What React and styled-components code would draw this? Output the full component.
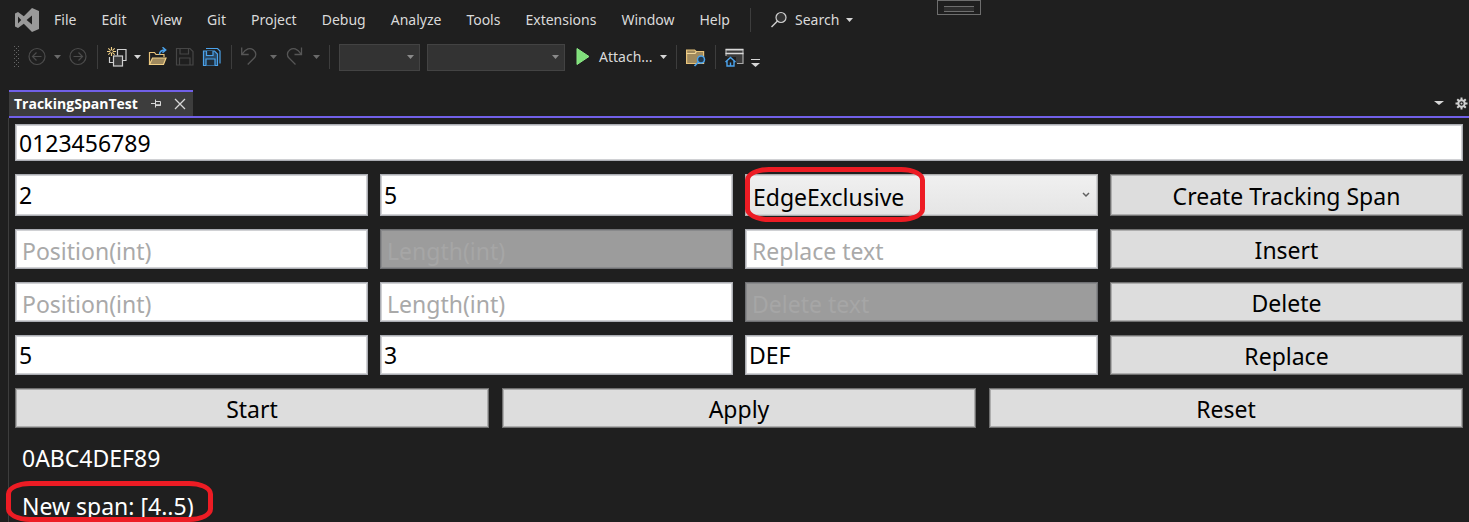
import React from "react";
import styled, { createGlobalStyle, css } from "styled-components";

const Global = createGlobalStyle`
  * { box-sizing: border-box; }
  body {
    margin: 0;
    background: #1f1f1f;
    font-family: "Noto Sans", "Open Sans", sans-serif;
  }
  button, input, select { font-family: inherit; margin: 0; }
`;

const Shell = styled.div`
  position: relative;
  min-height: 100vh;
  display: flex;
  flex-direction: column;
  background: #1f1f1f;
  color: #dadada;
  overflow: hidden;
`;

const MenuBar = styled.nav`
  display: flex;
  align-items: center;
  height: 40px;
  padding-left: 15px;
  gap: 25px;
  svg { flex: none; }
`;

const Logo = styled.svg`
  margin-right: -10px;
`;

const PlainButton = styled.button`
  display: flex;
  align-items: center;
  flex: none;
  padding: 0;
  border: 0;
  background: none;
  color: inherit;
  font-size: 14px;
  line-height: 20px;
  white-space: nowrap;
`;

const SearchButton = styled(PlainButton)`
  gap: 7px;
`;

const Separator = styled.span`
  flex: none;
  width: 1px;
  height: 24px;
  margin: 0 2px;
  background: #3d3d3d;
`;

const MenuSeparator = styled(Separator)`
  margin: 0 -6px 0 -5px;
`;

const DragHandle = styled.div`
  position: absolute;
  top: 0;
  left: 937px;
  width: 44px;
  height: 15px;
  padding: 5px 6px;
  border: 1px solid #6e6e6e;
  background: #1f1f1f;
  &::before {
    content: "";
    display: block;
    height: 4px;
    border: solid #6e6e6e;
    border-width: 1px 0;
    background: #2e2e2e;
  }
`;

const ToolBar = styled.div`
  display: flex;
  align-items: center;
  height: 34px;
  padding-left: 14px;
  gap: 7px;
  svg { flex: none; display: block; }
`;

const AttachButton = styled(PlainButton)`
  gap: 7px;
`;

const ToolSelect = styled.span`
  position: relative;
  display: flex;
  align-items: center;
  justify-content: flex-end;
  flex: none;
  width: ${(p) => p.$width}px;
  height: 27px;
  select {
    appearance: none;
    position: absolute;
    inset: 0;
    width: 100%;
    border: 1px solid #434343;
    background: #333333;
  }
  svg { position: relative; margin-right: 6px; pointer-events: none; }
`;

const TabStrip = styled.div`
  display: flex;
  align-items: center;
  justify-content: space-between;
  height: 28px;
  margin: 16px 0 0 9px;
  border-bottom: 2px solid #7160e8;
`;

const Tab = styled.div`
  display: flex;
  align-items: center;
  gap: 12px;
  height: 26px;
  padding: 0 7px 0 5px;
  border-top: 2px solid #7160e8;
  background: #3d3d3d;
  color: #fff;
  font-family: "Open Sans", "Noto Sans", sans-serif;
  font-size: 14px;
  font-weight: 700;
  line-height: 20px;
`;

const StripActions = styled.div`
  display: flex;
  align-items: center;
  gap: 11px;
  padding-right: 1px;
`;

const Panel = styled.main`
  flex: 1;
  display: flex;
  flex-direction: column;
  gap: 13px;
  margin-left: 8px;
  padding: 6px 6px 0;
  border-left: 1px solid #3d3d3d;
`;

const Row = styled.div`
  display: grid;
  grid-template-columns: repeat(${(p) => p.$columns}, minmax(0, 1fr));
  gap: ${(p) => (p.$columns === 3 ? 13 : 12)}px;
  height: ${(p) => p.$height || 40}px;
`;

const control = css`
  width: 100%;
  height: 100%;
  min-width: 0;
  border: 1px solid #abadb3;
  border-radius: 0;
  box-shadow: inset 0 0 0 1px #d0d1d4;
  color: #000;
  font-size: 23px;
  line-height: 32px;
`;

const TextBox = styled.input`
  ${control}
  padding: 0 3px;
  background: #fff;
  &::placeholder { color: #a9a9a9; opacity: 1; }
  &:placeholder-shown { padding: 4px 6px 0; }
  &:disabled {
    border-color: #6f7073;
    box-shadow: inset 0 0 0 1px #88898b;
    background: #9c9c9c;
  }
  &:disabled::placeholder { color: #a6a6a6; }
`;

const PushButton = styled.button`
  ${control}
  padding: 2px 0 0;
  border-color: #707070;
  box-shadow: inset 0 0 0 1px #adadad;
  background: #ddd;
`;

const ModeField = styled.div`
  position: relative;
  height: 100%;
  select {
    ${control}
    appearance: none;
    padding: 3px 8px 0 7px;
    border-color: #acacac;
    background: linear-gradient(#f0f0f0, #e5e5e5);
  }
  svg { position: absolute; right: 8px; top: 18px; pointer-events: none; }
`;

const Marker = styled.span`
  position: absolute;
  top: ${(p) => p.$top}px;
  left: ${(p) => p.$left}px;
  width: ${(p) => p.$width}px;
  height: ${(p) => p.$height}px;
  border: 5px solid #ed1c24;
  border-radius: 24px / 13px;
  pointer-events: none;
`;

const Results = styled.div`
  display: flex;
  flex-direction: column;
  align-items: flex-start;
  gap: 16px;
  padding: 1px 7px 0;
  color: #fff;
  font-size: 23px;
  line-height: 32px;
`;

const SpanResult = styled.output`
  position: relative;
`;

const Caret = ({ color = "#d6d6d6", width = 7 }) => (
  <svg width={width} height="4" viewBox="0 0 8 4" preserveAspectRatio="none" aria-hidden="true">
    <path d="M0 0h8L4 4z" fill={color} />
  </svg>
);

const LogoIcon = () => (
  <Logo width="24" height="24" viewBox="0 0 24 24" aria-label="Visual Studio">
    <path
      fillRule="evenodd"
      fill="#999"
      d="M17 0l7 3v18l-7 3-8.200-8.300L3 20l-3-1.500v-13L3 4l5.800 4.300zM17 7.500L11.600 12l5.400 4.500zM3 8.600v6.800L6.200 12z"
    />
  </Logo>
);

const SearchIcon = () => (
  <svg width="18" height="18" viewBox="0 0 18 18" fill="none" stroke="#d0d0d0" aria-hidden="true">
    <circle cx="11" cy="6.500" r="5" fill="#333" strokeWidth="1.200" />
    <path d="M7.500 10L1.500 16" strokeWidth="1.400" />
  </svg>
);

const GripIcon = () => (
  <svg width="6" height="22" viewBox="0 0 6 22" fill="#666" aria-hidden="true">
    {[0, 4, 8, 12, 16, 20].map((y) => (
      <path key={y} d={`M0 ${y}h1v1h-1zM4 ${y}h1v1h-1z`} />
    ))}
    {[2, 6, 10, 14, 18].map((y) => (
      <path key={y} d={`M2 ${y}h1v1h-1z`} />
    ))}
  </svg>
);

const ArrowCircle = ({ forward }) => (
  <svg width="20" height="20" viewBox="0 0 20 20" fill="none" stroke="#4c4c4c" strokeWidth="1.200" aria-hidden="true">
    <circle cx="10" cy="9.500" r="8" />
    {forward ? <path d="M5.500 9.500h9M10.500 5.500l4 4-4 4" /> : <path d="M14.500 9.500h-9M9.500 5.500l-4 4 4 4" />}
  </svg>
);

const NewItemIcon = () => (
  <svg width="20" height="20" viewBox="0 0 20 20" fill="none" aria-hidden="true">
    <g stroke="#d0d0d0" strokeWidth="1.200">
      <path d="M10 2.500h9v11h-3.500" />
      <path d="M2.500 10v5.500h4" />
      <rect x="6.500" y="9" width="9" height="10" fill="#3a3a3a" />
      <path d="M10.500 2.500v6" />
    </g>
    <path
      d="M4.500 0v9M0 4.500h9M1.300 1.300l6.400 6.400M7.700 1.300L1.300 7.700"
      stroke="#f0cf86"
      strokeWidth="1.100"
    />
    <circle cx="4.500" cy="4.500" r="1.300" fill="#1f1f1f" />
  </svg>
);

const OpenIcon = () => (
  <svg width="20" height="20" viewBox="0 0 20 20" fill="none" aria-hidden="true">
    <path d="M1.500 17V5.500h5l1.500 2h8V10" stroke="#e8c37a" strokeWidth="1.200" />
    <path d="M1.500 17.500l3-6.500h13.500l-2.500 6.500z" fill="#a08a5e" stroke="#f0cf86" strokeWidth="1.200" />
    <path d="M11.500 7.500c0-3 2-4.500 6-4.500M14.500 .300l3.200 2.700-3.200 2.800" stroke="#4ba3ec" strokeWidth="1.500" />
  </svg>
);

const SaveIcon = () => (
  <svg width="20" height="20" viewBox="0 0 20 20" fill="none" stroke="#464646" strokeWidth="1.200" aria-hidden="true">
    <path d="M1.500 1.500h13.500l3 3v13.500h-16.500z" />
    <path d="M5 1.500v5.500h8.500v-5.500M4.500 18v-7h10.500v7" />
  </svg>
);

const SaveAllIcon = () => (
  <svg width="20" height="20" viewBox="0 0 20 20" fill="none" stroke="#4ba3ec" strokeWidth="1.200" aria-hidden="true">
    <path d="M4 1.500h11.500l2.500 2.500v12.500" />
    <path d="M1.500 4h11l3 3v11.500h-14z" fill="#2a4a66" />
    <path d="M4.500 4v4.500h6.500v-4.500M4 18.500v-6.500h9v6.500" fill="#1f2b36" />
  </svg>
);

const UndoIcon = ({ flip }) => (
  <svg width="22" height="20" viewBox="0 0 22 20" fill="none" stroke="#565656" strokeWidth="1.300" aria-hidden="true">
    {flip ? (
      <path d="M17.500 .500v7h-7M17 7C13.500 1.500 9 .500 6 2.800C2.500 5.500 3 9 5 11L11.500 17.500" />
    ) : (
      <path d="M.700 .500v7h7M1.200 7C4.700 1.500 9.200 .500 12.200 2.800C15.700 5.500 15.200 9 13.200 11L6.700 17.500" />
    )}
  </svg>
);

const PlayIcon = () => (
  <svg width="20" height="18" viewBox="0 0 20 18" aria-hidden="true">
    <path d="M5 .500l12 8-12 8z" fill="#80df7b" stroke="#8ae885" />
  </svg>
);

const FolderSearchIcon = () => (
  <svg width="20" height="20" viewBox="0 0 20 20" fill="none" aria-hidden="true">
    <path d="M.600 16.500V3h8l1.500 1.500h7.500v12z" fill="#a08a5e" stroke="#e8c37a" strokeWidth="1.200" />
    <path d="M.600 6.500H9l1.500-2" stroke="#f3d898" strokeWidth="1.200" />
    <circle cx="15" cy="12.500" r="3.500" fill="#23384a" stroke="#4ba3ec" strokeWidth="1.500" />
    <path d="M12.500 15L8.500 19" stroke="#4ba3ec" strokeWidth="1.700" />
  </svg>
);

const WindowHomeIcon = () => (
  <svg width="19" height="20" viewBox="0 0 19 20" fill="none" aria-hidden="true">
    <path d="M1 9V3h17v13.500h-6" fill="#3a3a3a" stroke="#a8a8a8" strokeWidth="1.200" />
    <path d="M.500 2.500h18M.500 6.500h18" stroke="#d8d8d8" strokeWidth="1.300" />
    <path d="M0 10h11v10H0z" fill="#1f1f1f" />
    <path d="M.500 15L5.500 10.500l5 4.500M2 14v5h7v-5M5.500 19v-3.500" stroke="#4ba3ec" strokeWidth="1.400" />
  </svg>
);

const OverflowIcon = () => (
  <svg width="9" height="20" viewBox="0 0 9 20" aria-hidden="true">
    <path d="M0 12h9v1H0zM0 16h9l-4.500 4z" fill="#d6d6d6" />
  </svg>
);

const PinIcon = () => (
  <svg width="12" height="12" viewBox="0 0 12 12" fill="none" stroke="#d6d6d6" aria-hidden="true">
    <path d="M1 5.500h4M5.500 1.500v8M5.500 3.500h5v4h-5" />
    <path d="M5.500 7h5" strokeWidth="1.500" />
  </svg>
);

const CloseIcon = () => (
  <svg width="12" height="12" viewBox="0 0 12 12" fill="none" stroke="#d6d6d6" strokeWidth="1.300" aria-hidden="true">
    <path d="M1 1l10 10M11 1L1 11" />
  </svg>
);

const GearIcon = () => (
  <svg width="13" height="13" viewBox="-6.500 -6.500 13 13" fill="none" stroke="#d0d0d0" aria-hidden="true">
    <circle r="3.200" strokeWidth="2" />
    {[0, 45, 90, 135].map((a) => (
      <path key={a} d="M0-6v2.500M0 6v-2.500" strokeWidth="2" transform={`rotate(${a})`} />
    ))}
    <circle r="1" fill="#d0d0d0" stroke="none" />
  </svg>
);

const menus = ["File", "Edit", "View", "Git", "Project", "Debug", "Analyze", "Tools", "Extensions", "Window", "Help"];

const edits = [
  {
    action: "Insert",
    fields: [{ hint: "Position(int)" }, { hint: "Length(int)", disabled: true }, { hint: "Replace text" }],
  },
  {
    action: "Delete",
    fields: [{ hint: "Position(int)" }, { hint: "Length(int)" }, { hint: "Delete text", disabled: true }],
  },
  {
    action: "Replace",
    fields: [
      { hint: "Position(int)", value: "5" },
      { hint: "Length(int)", value: "3" },
      { hint: "Replace text", value: "DEF" },
    ],
  },
];

export default function App() {
  return (
    <Shell>
      <Global />
      <MenuBar>
        <LogoIcon />
        {menus.map((name) => (
          <PlainButton key={name}>{name}</PlainButton>
        ))}
        <MenuSeparator />
        <SearchButton>
          <SearchIcon />
          Search
          <Caret />
        </SearchButton>
      </MenuBar>
      <DragHandle />

      <ToolBar role="toolbar">
        <GripIcon />
        <PlainButton aria-label="Navigate backward"><ArrowCircle /></PlainButton>
        <PlainButton aria-label="Backward history"><Caret color="#6a6a6a" /></PlainButton>
        <PlainButton aria-label="Navigate forward"><ArrowCircle forward /></PlainButton>
        <Separator />
        <PlainButton aria-label="New item"><NewItemIcon /></PlainButton>
        <PlainButton aria-label="New item options"><Caret /></PlainButton>
        <PlainButton aria-label="Open file"><OpenIcon /></PlainButton>
        <PlainButton aria-label="Save"><SaveIcon /></PlainButton>
        <PlainButton aria-label="Save all"><SaveAllIcon /></PlainButton>
        <Separator />
        <PlainButton aria-label="Undo"><UndoIcon /></PlainButton>
        <PlainButton aria-label="Undo history"><Caret color="#6a6a6a" /></PlainButton>
        <PlainButton aria-label="Redo"><UndoIcon flip /></PlainButton>
        <PlainButton aria-label="Redo history"><Caret color="#6a6a6a" /></PlainButton>
        <Separator />
        <ToolSelect $width={81}>
          <select aria-label="Solution configuration" />
          <Caret color="#8a8a8a" />
        </ToolSelect>
        <ToolSelect $width={138}>
          <select aria-label="Solution platform" />
          <Caret color="#8a8a8a" />
        </ToolSelect>
        <AttachButton>
          <PlayIcon />
          Attach...
          <Caret />
        </AttachButton>
        <Separator />
        <PlainButton aria-label="Find in files"><FolderSearchIcon /></PlainButton>
        <Separator />
        <PlainButton aria-label="Start window"><WindowHomeIcon /></PlainButton>
        <PlainButton aria-label="Toolbar options"><OverflowIcon /></PlainButton>
      </ToolBar>

      <TabStrip>
        <Tab>
          TrackingSpanTest
          <PlainButton aria-label="Pin tab"><PinIcon /></PlainButton>
          <PlainButton aria-label="Close tab"><CloseIcon /></PlainButton>
        </Tab>
        <StripActions>
          <PlainButton aria-label="Open documents"><Caret width={10} /></PlainButton>
          <PlainButton aria-label="Window options"><GearIcon /></PlainButton>
        </StripActions>
      </TabStrip>

      <Panel>
        <Row $columns={1} $height={37}>
          <TextBox aria-label="Text" defaultValue="0123456789" />
        </Row>
        <Row $columns={4} $height={42}>
          <TextBox aria-label="Span start" defaultValue="2" />
          <TextBox aria-label="Span length" defaultValue="5" />
          <ModeField>
            <select aria-label="Tracking mode" defaultValue="EdgeExclusive">
              <option>EdgeExclusive</option>
            </select>
            <svg width="8" height="6" viewBox="0 0 8 6" fill="none" stroke="#606060" strokeWidth="1.500" aria-hidden="true">
              <path d="M1 1l3 3 3-3" />
            </svg>
            <Marker $top={-7} $left={0} $width={180} $height={55} />
          </ModeField>
          <PushButton>Create Tracking Span</PushButton>
        </Row>
        {edits.map(({ action, fields }) => (
          <Row key={action} $columns={4}>
            {fields.map(({ hint, value, disabled }) => (
              <TextBox
                key={hint}
                aria-label={`${action} ${hint}`}
                placeholder={hint}
                defaultValue={value}
                disabled={disabled}
              />
            ))}
            <PushButton>{action}</PushButton>
          </Row>
        ))}
        <Row $columns={3}>
          <PushButton>Start</PushButton>
          <PushButton>Apply</PushButton>
          <PushButton>Reset</PushButton>
        </Row>
        <Results>
          <output>0ABC4DEF89</output>
          <SpanResult>
            New span: [4..5)
            <Marker $top={-9} $left={-16} $width={207} $height={41} />
          </SpanResult>
        </Results>
      </Panel>
    </Shell>
  );
}
